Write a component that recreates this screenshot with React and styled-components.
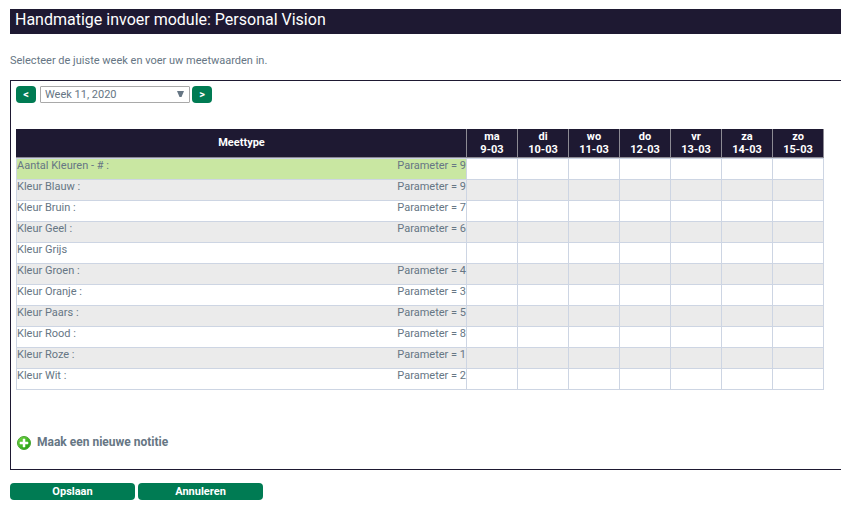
import React, { useState } from "react";
import styled, { createGlobalStyle } from "styled-components";

const navy = "#1e1932";
const green = "#007b53";
const slate = "#667684";
const line = "#cdd5e3";

const GlobalStyle = createGlobalStyle`
  *, *::before, *::after { box-sizing: border-box; }
  body {
    margin: 0;
    background: #fff;
    color: ${slate};
    font: 11px/13px Roboto, "Liberation Sans", sans-serif;
  }
  button, input, select { font: inherit; color: inherit; }
`;

const Page = styled.main`
  padding: 9px 17px 12px 10px;
`;

const Title = styled.h1`
  margin: 0;
  padding: 0 5px 4px;
  background: ${navy};
  color: #fff;
  font-size: 16px;
  line-height: 21px;
  font-weight: 400;
`;

const Intro = styled.p`
  margin: 20px 0 13px;
`;

const Panel = styled.section`
  border: 1px solid ${navy};
  border-right: 0;
  padding: 5px 5px 16px;
`;

const WeekBar = styled.div`
  display: flex;
  align-items: center;
  margin-bottom: 26px;
`;

const Button = styled.button`
  display: block;
  width: ${(p) => (p.$small ? "20px" : "125px")};
  height: 17px;
  padding: 0;
  border: 0;
  border-radius: 4px;
  background: ${green};
  color: #fff;
  font-weight: 700;
  line-height: 17px;
  text-align: center;
  cursor: pointer;
`;

const SelectBox = styled.div`
  position: relative;
  width: 150px;
  margin: 0 2px 0 4px;
`;

const Select = styled.select`
  appearance: none;
  display: block;
  width: 100%;
  height: 17px;
  padding: 0 20px 0 4px;
  border: 1px solid #a9a9a9;
  border-radius: 1px;
  background: #fff;
  line-height: 15px;
`;

const Arrow = styled.svg`
  position: absolute;
  right: 6px;
  top: 5px;
  width: 7px;
  height: 6px;
  pointer-events: none;
`;

const Table = styled.table`
  width: 100%;
  max-width: 808px;
  table-layout: fixed;
  border-collapse: collapse;
`;

const MeasureCol = styled.col`
  width: 450px;
`;

const HeadCell = styled.th`
  height: 28px;
  padding: 0;
  border-left: 1px solid ${(p) => (p.$first ? navy : "#8d8b94")};
  border-right: 1px solid #8d8b94;
  border-bottom: 1px solid #8d8b94;
  background: ${navy};
  color: #fff;
  font-weight: 700;
`;

const Row = styled.tr`
  height: 21px;
  background: #fff;
  &:nth-child(even) { background: #ebebeb; }
  &:first-child { height: 22px; }
  &:first-child > * {
    padding-top: 1px;
    box-shadow: inset 0 1px ${line};
  }
`;

const Cell = styled.td`
  padding: 0;
  border: 1px solid ${line};
  vertical-align: top;
`;

const NameCell = styled.th`
  padding: 0;
  border: 1px solid ${line};
  background: ${(p) => (p.$active ? "#c9e7a2" : "transparent")};
  font-weight: 400;
  text-align: left;
  vertical-align: top;
`;

const Measure = styled.div`
  display: flex;
  justify-content: space-between;
`;

const ValueInput = styled.input`
  display: block;
  width: 100%;
  height: 20px;
  padding: 0 4px;
  border: 0;
  background: transparent;
`;

const NoteLink = styled.a`
  display: inline-flex;
  align-items: center;
  gap: 5px;
  margin-top: 44px;
  color: ${slate};
  font-size: 12px;
  line-height: 16px;
  font-weight: 700;
  text-decoration: none;
`;

const Actions = styled.div`
  display: flex;
  gap: 3px;
  margin-top: 13px;
`;

const days = [
  ["ma", "9-03"],
  ["di", "10-03"],
  ["wo", "11-03"],
  ["do", "12-03"],
  ["vr", "13-03"],
  ["za", "14-03"],
  ["zo", "15-03"],
];

const measures = [
  ["Aantal Kleuren - # :", "9"],
  ["Kleur Blauw :", "9"],
  ["Kleur Bruin :", "7"],
  ["Kleur Geel :", "6"],
  ["Kleur Grijs", null],
  ["Kleur Groen :", "4"],
  ["Kleur Oranje :", "3"],
  ["Kleur Paars :", "5"],
  ["Kleur Rood :", "8"],
  ["Kleur Roze :", "1"],
  ["Kleur Wit :", "2"],
];

function PlusIcon() {
  return (
    <svg width="16" height="16" viewBox="0 0 16 16" aria-hidden="true">
      <defs>
        <linearGradient id="plusFill" x1="0" y1="0" x2="1" y2="1">
          <stop offset="0" stopColor="#7edb4b" />
          <stop offset="0.5" stopColor="#45b927" />
          <stop offset="1" stopColor="#1f9610" />
        </linearGradient>
      </defs>
      <circle cx="8" cy="9" r="6.5" fill="url(#plusFill)" stroke="#48a532" />
      <path d="M7 5h2v3h3v2H9v3H7v-3H4V8h3z" fill="#fff" stroke="#fff" strokeWidth="0.5" strokeLinejoin="round" />
    </svg>
  );
}

export default function App() {
  const [values, setValues] = useState({});

  return (
    <>
      <GlobalStyle />
      <Page>
        <Title>Handmatige invoer module: Personal Vision</Title>
        <Intro>Selecteer de juiste week en voer uw meetwaarden in.</Intro>
        <Panel>
          <WeekBar>
            <Button type="button" $small aria-label="Vorige week">&lt;</Button>
            <SelectBox>
              <Select aria-label="Week" defaultValue="11">
                <option value="11">Week 11, 2020</option>
              </Select>
              <Arrow viewBox="0 0 7 6" aria-hidden="true">
                <path d="M0 0h7L4.500 6h-2z" fill={slate} />
              </Arrow>
            </SelectBox>
            <Button type="button" $small aria-label="Volgende week">&gt;</Button>
          </WeekBar>
          <Table>
            <colgroup>
              <MeasureCol />
              {days.map(([day]) => <col key={day} />)}
            </colgroup>
            <thead>
              <tr>
                <HeadCell scope="col" $first>Meettype</HeadCell>
                {days.map(([day, date]) => (
                  <HeadCell scope="col" key={day}>{day}<br />{date}</HeadCell>
                ))}
              </tr>
            </thead>
            <tbody>
              {measures.map(([name, parameter], index) => (
                <Row key={name}>
                  <NameCell scope="row" $active={index === 0}>
                    <Measure>
                      <span>{name}</span>
                      {parameter && <span>Parameter = {parameter}</span>}
                    </Measure>
                  </NameCell>
                  {days.map(([day, date]) => {
                    const id = `${name}|${day}`;
                    return (
                      <Cell key={day}>
                        <ValueInput
                          aria-label={`${name} ${day} ${date}`}
                          value={values[id] || ""}
                          onChange={(e) => setValues({ ...values, [id]: e.target.value })}
                        />
                      </Cell>
                    );
                  })}
                </Row>
              ))}
            </tbody>
          </Table>
          <NoteLink href="#notitie">
            <PlusIcon />
            Maak een nieuwe notitie
          </NoteLink>
        </Panel>
        <Actions>
          <Button type="button">Opslaan</Button>
          <Button type="button">Annuleren</Button>
        </Actions>
      </Page>
    </>
  );
}
